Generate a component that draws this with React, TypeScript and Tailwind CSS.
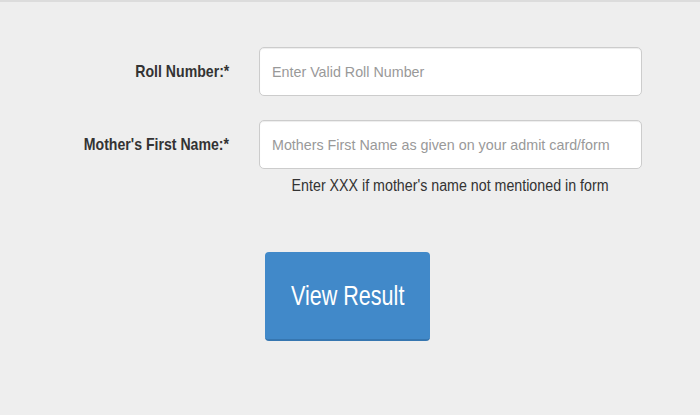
const ResultForm = () => {
  return (
    <main className="min-h-[415px] w-[700px] bg-[#eeeeee] border-t-2 border-[#dcdcdc] font-['Liberation_Sans',Arial,sans-serif]">
      <form className="grid grid-cols-[229px_383px] gap-x-[30px] pt-[45px]">
        <label className="flex h-[49px] items-center justify-end">
          <span className="inline-block origin-right scale-x-[0.83] text-[17px] font-bold text-[#333333]">
            Roll Number:*
          </span>
        </label>
        <input
          type="text"
          placeholder="Enter Valid Roll Number"
          className="h-[49px] w-[383px] rounded-[5px] border border-[#cccccc] bg-white px-[12px] text-[14.3px] text-[#555555] shadow-[inset_0_1px_1px_rgba(0,0,0,0.075)] outline-none placeholder:text-[#999999]"
        />

        <label className="mt-[24px] flex h-[49px] items-center justify-end">
          <span className="inline-block origin-right scale-x-[0.83] whitespace-nowrap text-[17px] font-bold text-[#333333]">
            Mother's First Name:*
          </span>
        </label>
        <div className="mt-[24px] flex flex-col">
          <input
            type="text"
            placeholder="Mothers First Name as given on your admit card/form"
            className="h-[49px] w-[383px] rounded-[5px] border border-[#cccccc] bg-white px-[12px] text-[14.3px] text-[#555555] shadow-[inset_0_1px_1px_rgba(0,0,0,0.075)] outline-none placeholder:text-[#999999]"
          />
          <p className="mt-[7px] text-center leading-[20px]">
            <span className="inline-block scale-x-[0.89] whitespace-nowrap text-[16px] text-[#333333]">
              Enter XXX if mother's name not mentioned in form
            </span>
          </p>
          <button
            type="submit"
            className="ml-[6px] mt-[56px] flex h-[89px] w-[165px] items-center justify-center rounded-[4px] border-b-2 border-[#3676b0] bg-[#4189c9] text-white"
          >
            <span className="inline-block scale-x-[0.77] whitespace-nowrap text-[28px]">
              View Result
            </span>
          </button>
        </div>
      </form>
    </main>
  );
};

export default ResultForm;
